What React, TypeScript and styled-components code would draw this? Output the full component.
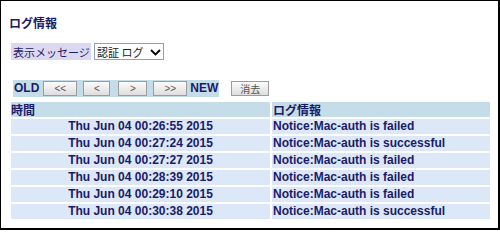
import React from "react";
import styled, { createGlobalStyle } from "styled-components";

const navy = "#1b1b68";
const headBlue = "#c5dde9";
const rowBlue = "#dce7f7";
const jp = `"Noto Sans CJK JP", "Liberation Sans", sans-serif`;
const latin = `"Liberation Sans", Arial, "Noto Sans CJK JP", sans-serif`;

const GlobalStyle = createGlobalStyle`
  body {
    margin: 0;
    background: #fff;
    font-family: ${latin};
  }
`;

const Frame = styled.div`
  width: 500px;
  height: 230px;
  box-sizing: border-box;
  border: 1px solid #000;
  border-right-width: 2px;
  border-bottom-width: 2px;
  background: #fff;
  overflow: hidden;
`;

const Title = styled.h1`
  margin: 14px 0 0 8px;
  font-family: ${jp};
  font-size: 12px;
  font-weight: 700;
  line-height: 16px;
  color: ${navy};
`;

const FilterRow = styled.div`
  display: flex;
  align-items: stretch;
  gap: 3px;
  height: 17px;
  margin: 12px 0 0 10px;
`;

const FilterLabel = styled.span`
  display: flex;
  align-items: center;
  width: 80px;
  box-sizing: border-box;
  padding: 0 2px;
  background: #dcd8ef;
  font-family: ${jp};
  font-size: 11px;
  color: ${navy};
  white-space: nowrap;
`;

const SelectWrap = styled.div`
  position: relative;
  width: 70px;
  height: 17px;
`;

const Select = styled.select`
  appearance: none;
  width: 100%;
  height: 100%;
  box-sizing: border-box;
  margin: 0;
  padding: 0 0 0 2px;
  border: 1px solid #8ea3b9;
  border-radius: 0;
  background: #fff;
  font-family: ${jp};
  font-size: 11px;
  color: #222;
  outline: none;
`;

const Chevron = styled.svg`
  position: absolute;
  right: 3px;
  top: 6px;
  pointer-events: none;
`;

const NavRow = styled.div`
  display: flex;
  align-items: center;
  margin: 20px 0 0 12px;
`;

const NavGroup = styled.div`
  display: flex;
  align-items: center;
  height: 17px;
  background: ${headBlue};
`;

const EdgeLabel = styled.span<{ $ml?: number }>`
  margin-left: ${(p) => p.$ml ?? 0}px;
  padding: 0 1px;
  font-size: 12px;
  font-weight: 700;
  line-height: 17px;
  color: ${navy};
`;

const NavButton = styled.button<{ $w: number; $ml: number }>`
  width: ${(p) => p.$w}px;
  height: 15px;
  margin: 0 0 0 ${(p) => p.$ml}px;
  padding: 0;
  box-sizing: border-box;
  border: 1px solid #9c9c9c;
  border-radius: 0;
  background: linear-gradient(#fbfbfb, #dedede);
  font-family: ${latin};
  font-size: 10px;
  line-height: 13px;
  color: #555;
`;

const ClearButton = styled(NavButton)`
  font-family: ${jp};
  font-size: 10px;
`;

const LogTable = styled.table`
  margin: 3px 0 0 8px;
  border-collapse: separate;
  border-spacing: 2px;
`;

const HeadCell = styled.th<{ $w: number; $pad?: number }>`
  width: ${(p) => p.$w}px;
  height: 15px;
  padding: 0 0 0 ${(p) => p.$pad ?? 0}px;
  background: ${headBlue};
  text-align: left;
  font-family: ${jp};
  font-size: 12px;
  font-weight: 700;
  line-height: 15px;
  color: ${navy};
`;

const DataCell = styled.td<{ $align: "center" | "left" }>`
  height: 15px;
  padding: 0 0 0 ${(p) => (p.$align === "left" ? 1 : 0)}px;
  background: ${rowBlue};
  text-align: ${(p) => p.$align};
  font-size: 12px;
  font-weight: 700;
  line-height: 15px;
  color: ${navy};
  white-space: nowrap;
`;

const logs = [
  { time: "Thu Jun 04 00:26:55 2015", info: "Notice:Mac-auth is failed" },
  { time: "Thu Jun 04 00:27:24 2015", info: "Notice:Mac-auth is successful" },
  { time: "Thu Jun 04 00:27:27 2015", info: "Notice:Mac-auth is failed" },
  { time: "Thu Jun 04 00:28:39 2015", info: "Notice:Mac-auth is failed" },
  { time: "Thu Jun 04 00:29:10 2015", info: "Notice:Mac-auth is failed" },
  { time: "Thu Jun 04 00:30:38 2015", info: "Notice:Mac-auth is successful" },
];

const navButtons = [
  { label: "<<", w: 34, ml: 3 },
  { label: "<", w: 27, ml: 6 },
  { label: ">", w: 29, ml: 8 },
  { label: ">>", w: 34, ml: 6 },
];

const App = () => {
  const [kind, setKind] = React.useState("auth");

  return (
    <>
      <GlobalStyle />
      <Frame>
        <Title>ログ情報</Title>
        <FilterRow>
          <FilterLabel>表示メッセージ</FilterLabel>
          <SelectWrap>
            <Select value={kind} onChange={(e) => setKind(e.target.value)}>
              <option value="auth">認証 ログ</option>
              <option value="system">システム ログ</option>
            </Select>
            <Chevron width="11" height="7" viewBox="0 0 11 7">
              <path d="M1 1 L5.5 5.5 L10 1" fill="none" stroke="#000" strokeWidth="1.8" />
            </Chevron>
          </SelectWrap>
        </FilterRow>
        <NavRow>
          <NavGroup>
            <EdgeLabel>OLD</EdgeLabel>
            {navButtons.map((b) => (
              <NavButton key={b.label} $w={b.w} $ml={b.ml}>
                {b.label}
              </NavButton>
            ))}
            <EdgeLabel $ml={2}>NEW</EdgeLabel>
          </NavGroup>
          <ClearButton $w={38} $ml={12}>
            消去
          </ClearButton>
        </NavRow>
        <LogTable>
          <thead>
            <tr>
              <HeadCell $w={259}>時間</HeadCell>
              <HeadCell $w={217} $pad={1}>
                ログ情報
              </HeadCell>
            </tr>
          </thead>
          <tbody>
            {logs.map((log) => (
              <tr key={log.time}>
                <DataCell $align="center">{log.time}</DataCell>
                <DataCell $align="left">{log.info}</DataCell>
              </tr>
            ))}
          </tbody>
        </LogTable>
      </Frame>
    </>
  );
};

export default App;
